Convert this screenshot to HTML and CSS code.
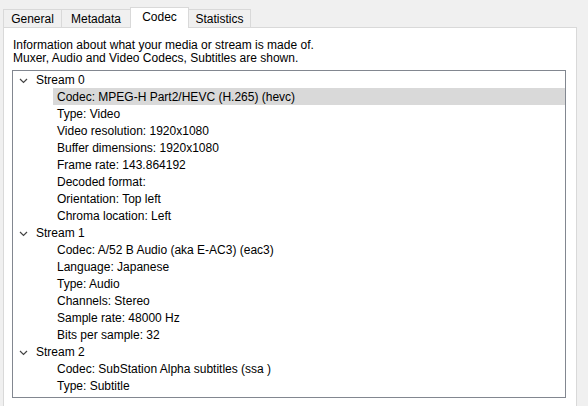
FILE: index.html
```html
<!DOCTYPE html>
<html>
<head>
<meta charset="utf-8">
<link rel="stylesheet" href="styles.css">
</head>
<body>
<div class="tabs">
  <div class="tab tab-general">General</div>
  <div class="tab tab-metadata">Metadata</div>
  <div class="tab tab-codec active">Codec</div>
  <div class="tab tab-stats">Statistics</div>
</div>
<div class="pane">
  <p class="info">Information about what your media or stream is made of.<br>Muxer, Audio and Video Codecs, Subtitles are shown.</p>
  <div class="tree">
    <div class="row parent"><svg class="chev" width="9" height="6" viewBox="0 0 9 6"><polyline points="1,1 4.5,4.5 8,1" fill="none" stroke="#444" stroke-width="1.2"/></svg>Stream 0</div>
    <div class="row child selected"><span>Codec: MPEG-H Part2/HEVC (H.265) (hevc)</span></div>
    <div class="row child"><span>Type: Video</span></div>
    <div class="row child"><span>Video resolution: 1920x1080</span></div>
    <div class="row child"><span>Buffer dimensions: 1920x1080</span></div>
    <div class="row child"><span>Frame rate: 143.864192</span></div>
    <div class="row child"><span>Decoded format:</span></div>
    <div class="row child"><span>Orientation: Top left</span></div>
    <div class="row child"><span>Chroma location: Left</span></div>
    <div class="row parent"><svg class="chev" width="9" height="6" viewBox="0 0 9 6"><polyline points="1,1 4.5,4.5 8,1" fill="none" stroke="#444" stroke-width="1.2"/></svg>Stream 1</div>
    <div class="row child"><span>Codec: A/52 B Audio (aka E-AC3) (eac3)</span></div>
    <div class="row child"><span>Language: Japanese</span></div>
    <div class="row child"><span>Type: Audio</span></div>
    <div class="row child"><span>Channels: Stereo</span></div>
    <div class="row child"><span>Sample rate: 48000 Hz</span></div>
    <div class="row child"><span>Bits per sample: 32</span></div>
    <div class="row parent"><svg class="chev" width="9" height="6" viewBox="0 0 9 6"><polyline points="1,1 4.5,4.5 8,1" fill="none" stroke="#444" stroke-width="1.2"/></svg>Stream 2</div>
    <div class="row child"><span>Codec: SubStation Alpha subtitles (ssa )</span></div>
    <div class="row child"><span>Type: Subtitle</span></div>
  </div>
</div>
</body>
</html>
```
FILE: styles.css
```css
html, body {
  margin: 0;
  padding: 0;
  background: #f0f0f0;
  height: 100%;
  overflow: hidden;
}
body {
  font-family: "Liberation Sans", Arial, sans-serif;
  font-size: 12px;
  color: #000;
  padding-top: 7px;
  box-sizing: border-box;
}
.tabs {
  display: flex;
  align-items: flex-end;
  padding-left: 3px;
  height: 20px;
  position: relative;
  z-index: 1;
}
.tab {
  height: 18px;
  box-sizing: border-box;
  border: 1px solid #d9d9d9;
  border-bottom: none;
  margin-left: -1px;
  display: flex;
  align-items: center;
  justify-content: center;
  background: #f0f0f0;
  padding-top: 1px;
}
.tab:first-child { margin-left: 0; }
.tab-general { width: 59px; }
.tab-metadata { width: 70px; }
.tab-codec { width: 59px; }
.tab-stats { width: 63px; }
.tab.active {
  height: 21px;
  margin-bottom: -1px;
  background: #fff;
  position: relative;
  z-index: 2;
  padding-top: 1px;
  padding-bottom: 3px;
}
.pane {
  margin-left: 3px;
  width: 574px;
  height: 400px;
  box-sizing: border-box;
  background: #fff;
  border: 1px solid #d9d9d9;
  padding: 11px 10px 0 8px;
}
.info {
  margin: 0;
  line-height: 13px;
  padding-left: 1px;
}
.tree {
  margin-top: 5px;
  height: 328px;
  box-sizing: border-box;
  border: 1px solid #828790;
}
.row {
  height: 17px;
  box-sizing: border-box;
  padding-top: 2px;
  line-height: 15px;
  white-space: nowrap;
  display: flex;
  align-items: center;
}
.parent {
  padding-left: 6px;
}
.chev {
  width: 9px;
  height: 6px;
  margin-right: 8px;
}
.child {
  margin-left: 40px;
  padding-left: 4px;
}
.selected {
  background: #d9d9d9;
}
```
